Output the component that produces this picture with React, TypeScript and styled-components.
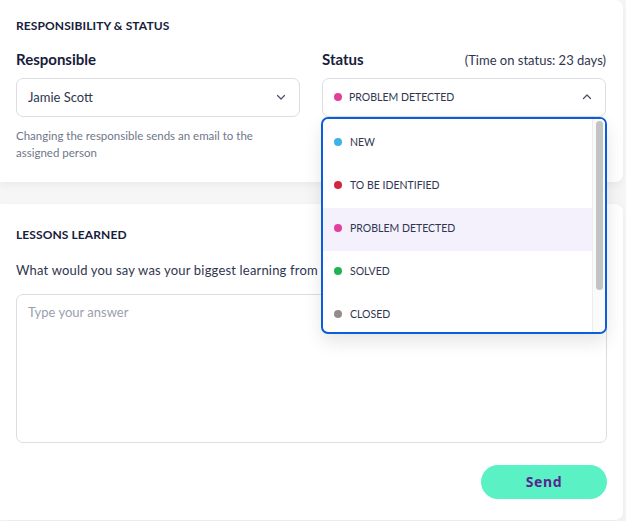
import React from 'react';
import styled, { createGlobalStyle } from 'styled-components';

/*
 * Palette.
 */

const colors = {
  navy: '#17203b',
  text: '#2f3650',
  muted: '#707689',
  placeholder: '#9a9fae',
  border: '#dcdde1',
  page: '#f6f6f6',
  focus: '#0b5ed7',
  hover: '#f4f1fd',
  mint: '#5af2c5',
  purple: '#57278f'
};

const fontStack = '"Lato", "Open Sans", sans-serif';

/*
 * Status options.
 */

type StatusOption = {
  label: string;
  color: string;
};

const statusOptions: StatusOption[] = [
  { label: 'New', color: '#3eb2e4' },
  { label: 'To be identified', color: '#d1283d' },
  { label: 'Problem detected', color: '#e23f9d' },
  { label: 'Solved', color: '#1fb450' },
  { label: 'Closed', color: '#958b8b' }
];

const selectedStatus = 'Problem detected';

/*
 * Styles.
 */

const GlobalStyle = createGlobalStyle`
  html, body {
    margin: 0;
    padding: 0;
    background-color: ${colors.page};
    font-family: ${fontStack};
    color: ${colors.text};
  }

  * {
    box-sizing: border-box;
  }
`;

const Page = styled.div`
  width: 626px;
  height: 521px;
  overflow: hidden;
  display: flex;
  flex-direction: column;
  gap: 22px;
`;

const Card = styled.section<{ $height: number }>`
  width: 623px;
  height: ${props => props.$height}px;
  flex-shrink: 0;
  background-color: #ffffff;
  border-radius: 0 8px 8px 0;
  box-shadow: 0 3px 8px rgba(0, 0, 0, 0.05);
  padding: 0 17px 0 16px;
  display: flex;
  flex-direction: column;
`;

const SectionTitle = styled.h2<{ $top: number }>`
  margin: ${props => props.$top}px 0 0 0;
  font-size: 12px;
  line-height: 14px;
  font-weight: 700;
  color: ${colors.navy};
  letter-spacing: 0.1px;
`;

const Columns = styled.div`
  display: grid;
  grid-template-columns: 284px 284px;
  column-gap: 22px;
  margin-top: 17px;
`;

const Field = styled.div`
  position: relative;
  display: flex;
  flex-direction: column;
`;

const LabelRow = styled.div`
  display: flex;
  align-items: baseline;
  justify-content: space-between;
  height: 18px;
`;

const Label = styled.span`
  font-size: 15px;
  line-height: 18px;
  font-weight: 700;
  color: ${colors.navy};
`;

const LabelNote = styled.span`
  font-size: 13px;
  color: ${colors.text};
`;

const SelectBox = styled.div`
  margin-top: 10px;
  height: 39px;
  border: 1px solid ${colors.border};
  border-radius: 7px;
  padding: 0 11px 1px 11px;
  display: flex;
  align-items: center;
  gap: 7px;
`;

const SelectValue = styled.span`
  flex: 1;
  font-size: 13px;
  color: ${colors.text};
`;

const StatusText = styled.span`
  flex: 1;
  font-size: 10.5px;
  text-transform: uppercase;
  color: ${colors.text};
`;

const Dot = styled.span<{ $color: string }>`
  width: 8px;
  height: 8px;
  border-radius: 50%;
  flex-shrink: 0;
  background-color: ${props => props.$color};
`;

const Chevron = styled.svg`
  width: 12px;
  height: 12px;
  flex-shrink: 0;
  margin-right: 1px;
`;

const HelpText = styled.p`
  margin: 10px 0 0 0;
  font-size: 11.5px;
  line-height: 17px;
  color: ${colors.muted};
  max-width: 270px;
`;

const Menu = styled.div`
  position: absolute;
  top: 67px;
  left: -1px;
  right: -1px;
  height: 217px;
  background-color: #ffffff;
  border: 2px solid ${colors.focus};
  border-radius: 7px;
  box-shadow: 0 8px 18px rgba(0, 0, 0, 0.1);
  display: flex;
  overflow: hidden;
  z-index: 2;
`;

const MenuList = styled.ul`
  flex: 1;
  margin: 0;
  padding: 3px 0 0 0;
  list-style: none;
  overflow: hidden;
`;

const MenuItem = styled.li<{ $active?: boolean }>`
  height: 43px;
  display: flex;
  align-items: center;
  gap: 8px;
  padding: 0 0 4px 11px;
  font-size: 10.5px;
  text-transform: uppercase;
  color: ${colors.text};
  background-color: ${props => (props.$active ? colors.hover : 'transparent')};
`;

const ScrollTrack = styled.div`
  width: 13px;
  flex-shrink: 0;
  border-left: 1px solid #ededed;
  padding: 2px 2px 0 3px;
  background-color: #fafafa;
`;

const ScrollThumb = styled.div`
  height: 169px;
  border-radius: 4px;
  background-color: #c3c3c3;
`;

const Question = styled.p`
  margin: 20px 0 0 0;
  font-size: 13px;
  line-height: 16px;
  letter-spacing: 0.18px;
  color: ${colors.text};
  white-space: nowrap;
`;

const AnswerBox = styled.textarea`
  margin-top: 16px;
  width: 591px;
  height: 149px;
  border: 1px solid ${colors.border};
  border-radius: 7px;
  padding: 9px 11px;
  resize: none;
  font-family: ${fontStack};
  font-size: 13px;
  color: ${colors.text};
  outline: none;

  &::placeholder {
    color: ${colors.placeholder};
  }
`;

const Actions = styled.div`
  display: flex;
  justify-content: flex-end;
  width: 591px;
  margin-top: 22px;
`;

const SendButton = styled.button`
  width: 126px;
  height: 34px;
  border: none;
  border-radius: 17px;
  background-color: ${colors.mint};
  color: ${colors.purple};
  font-family: "Noto Sans", ${fontStack};
  font-size: 14px;
  font-weight: 700;
  letter-spacing: 0.6px;
  padding-bottom: 2px;
  cursor: pointer;
`;

/*
 * Chevron icons.
 */

function ChevronIcon({ up }: { up?: boolean }) {
  return (
    <Chevron viewBox={'0 0 12 12'}>
      <path
        d={up ? 'M2.5 7.5 L6 4 L9.5 7.5' : 'M2.5 4.5 L6 8 L9.5 4.5'}
        fill={'none'}
        stroke={'#4a5068'}
        strokeLinecap={'round'}
        strokeLinejoin={'round'}
        strokeWidth={1.2}
      />
    </Chevron>
  );
}

/*
 * App component.
 */

export default function App() {
  const current = statusOptions.find(option => option.label === selectedStatus) ?? statusOptions[0];

  return (
    <>
      <GlobalStyle />
      <Page>
        <Card $height={182}>
          <SectionTitle $top={19}>
            {'RESPONSIBILITY & STATUS'}
          </SectionTitle>

          <Columns>
            <Field>
              <LabelRow>
                <Label>{'Responsible'}</Label>
              </LabelRow>

              <SelectBox>
                <SelectValue>{'Jamie Scott'}</SelectValue>
                <ChevronIcon />
              </SelectBox>

              <HelpText>
                {'Changing the responsible sends an email to the assigned person'}
              </HelpText>
            </Field>

            <Field>
              <LabelRow>
                <Label>{'Status'}</Label>
                <LabelNote>{'(Time on status: 23 days)'}</LabelNote>
              </LabelRow>

              <SelectBox>
                <Dot $color={current.color} />
                <StatusText>{current.label}</StatusText>
                <ChevronIcon up />
              </SelectBox>

              <Menu>
                <MenuList>
                  {statusOptions.map(option => (
                    <MenuItem
                      $active={option.label === current.label}
                      key={option.label}
                    >
                      <Dot $color={option.color} />
                      {option.label}
                    </MenuItem>
                  ))}
                </MenuList>

                <ScrollTrack>
                  <ScrollThumb />
                </ScrollTrack>
              </Menu>
            </Field>
          </Columns>
        </Card>

        <Card $height={316}>
          <SectionTitle $top={24}>
            {'LESSONS LEARNED'}
          </SectionTitle>

          <Question>
            {'What would you say was your biggest learning from'}
          </Question>

          <AnswerBox placeholder={'Type your answer'} />

          <Actions>
            <SendButton type={'button'}>
              {'Send'}
            </SendButton>
          </Actions>
        </Card>
      </Page>
    </>
  );
}
